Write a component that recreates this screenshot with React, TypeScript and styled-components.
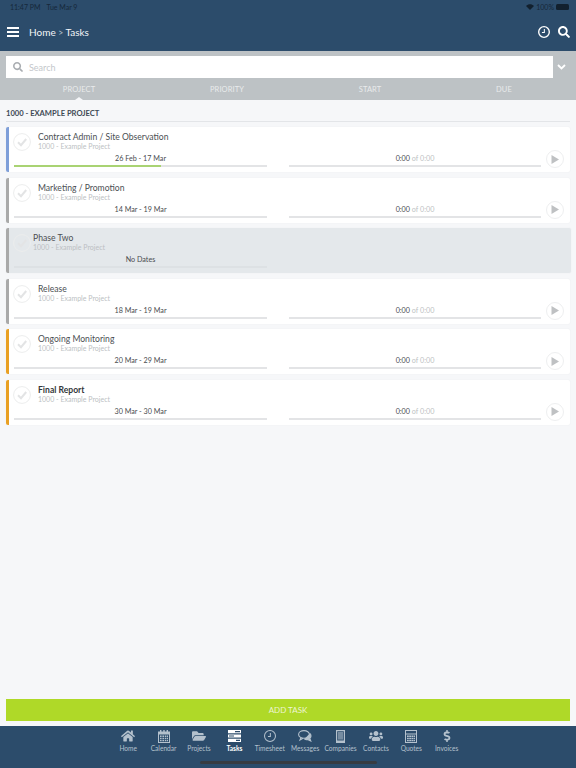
import React from "react";
import styled, { createGlobalStyle } from "styled-components";
import { FaHome, FaFolderOpen, FaUsers, FaDollarSign, FaSearch } from "react-icons/fa";

const Global = createGlobalStyle`
  html, body { margin: 0; padding: 0; background: #f6f7f9; }
  * { box-sizing: border-box; }
  body { font-family: Lato, "Open Sans", sans-serif; }
`;
const Page = styled.div`
  width: 576px; height: 768px; display: flex; flex-direction: column; overflow: hidden; background: #f6f7f9;
`;
const Header = styled.header`
  height: 51px; flex: none; background: #2c4c6b; padding: 0 6px 0 7px; display: flex; flex-direction: column;
`;
const StatusBar = styled.div`
  height: 14px; display: flex; align-items: center; justify-content: space-between; font-size: 7px; color: #16283a; padding: 0 1px 0 3px;
`;
const StatusRight = styled.div`display: flex; align-items: center; gap: 2px;`;
const Battery = styled.span`
  width: 13px; height: 6px; border-radius: 1.5px; background: #12202e; display: inline-block;
`;
const TimeGap = styled.span`margin-left: 6px;`;
const NavRow = styled.div`
  flex: 1; display: flex; align-items: center; padding-bottom: 2px; color: #fff;
`;
const Burger = styled.span`
  width: 12px; height: 10px; display: flex; flex-direction: column; justify-content: space-between;
  & > i { display: block; height: 2px; background: #fff; }
`;
const Crumb = styled.span`
  margin-left: 10px; font-size: 10px; flex: 1; color: #f2f5f8;
  & > em { font-style: normal; opacity: .7; font-size: 8.5px; }
`;
const NavIcons = styled.div`display: flex; align-items: center; gap: 8px;`;
const FilterBar = styled.div`
  height: 49px; flex: none; background: #bdc2c5; display: flex; flex-direction: column; padding: 5px 6px 0;
`;
const SearchRow = styled.div`display: flex; align-items: center; height: 22px;`;
const SearchBox = styled.div`
  width: 547px; height: 22px; background: #fff; display: flex; align-items: center; padding-left: 7px; gap: 6px;
  color: #c4c7cb; font-size: 9px;
  & > svg { color: #a9adb1; }
`;
const Chevron = styled.span`margin-left: 4px; display: flex;`;
const Tabs = styled.div`
  display: grid; grid-template-columns: 146px 150px 136px 132px; margin-top: 7px; flex: 1;
`;
const Tab = styled.div<{ $active?: boolean }>`
  position: relative; text-align: center; font-size: 7.5px; line-height: 10px; color: #e9ebec; letter-spacing: .1px;
  ${p => p.$active ? `&::after {
    content: ""; position: absolute; left: 50%; bottom: 0; margin-left: -4px; border: 4px solid transparent; border-top: 0;
    border-bottom: 3px solid #f6f7f9;
  }` : ""}
`;
const Content = styled.main`flex: 1; padding: 0 6px; display: flex; flex-direction: column;`;
const SectionTitle = styled.h2`
  margin: 0; padding-top: 8px; height: 22px; font-size: 7.6px; line-height: 11px; font-weight: 700; color: #3f4a55; letter-spacing: 0;
  border-bottom: 1px solid #e3e5e8;
`;
const List = styled.div`display: flex; flex-direction: column; gap: 5.6px; padding-top: 5px;`;
const Card = styled.article<{ $stripe: string; $muted?: boolean }>`
  height: 45px; border-left: 3px solid ${p => p.$stripe}; border-radius: 2px; padding: 5px 0 0 4px;
  background: ${p => p.$muted ? "#e4e8eb" : "#fff"};
  box-shadow: 0 0 2px rgba(60, 70, 80, .06);
  margin-right: ${p => p.$muted ? "-1px" : "0"};
`;
const TopRow = styled.div`height: 19px; display: flex; align-items: flex-start;`;
const Check = styled.svg`width: 18px; height: 18px; margin-top: 1px; flex: none;`;
const Titles = styled.div<{ $muted?: boolean }>`margin-left: ${p => p.$muted ? "2px" : "7px"};`;
const Title = styled.div<{ $bold?: boolean }>`
  font-size: 8.6px; line-height: 10px; color: ${p => p.$bold ? "#33373b" : "#4b4f53"}; font-weight: ${p => p.$bold ? 700 : 400};
`;
const Sub = styled.div`font-size: 7px; line-height: 9px; color: #bcbfc3;`;
const BottomRow = styled.div`height: 17px; display: flex; align-items: flex-end; margin-left: 1px;`;
const Segment = styled.div`width: 253px; flex: none; padding-bottom: 1px;`;
const TimeSegment = styled(Segment)`width: 252px; margin-left: 22px;`;
const SegText = styled.div`font-size: 7.2px; line-height: 10px; height: 11px; text-align: center; color: #4a4d50;`;
const Of = styled.span`color: #bcbfc3;`;
const Track = styled.div<{ $muted?: boolean }>`height: 2px; background: ${p => p.$muted ? "#dde1e4" : "#e3e4e6"};`;
const Fill = styled.div`height: 100%; background: #a9d373;`;
const Play = styled.span`
  width: 18px; height: 18px; margin-left: 5px; border: 1px solid #eeeff0; border-radius: 50%; display: flex; align-items: center; justify-content: center; flex: none;
`;
const AddTask = styled.button`
  height: 22px; flex: none; margin: 0 6px 5px; border: 0; background: #afd928; color: #eef5d4; font: 400 8px/22px Lato, sans-serif; padding: 0;
`;
const TabBar = styled.nav`
  height: 42px; flex: none; background: #2c4c6b; position: relative; display: flex; padding: 3px 0 0 110.5px;
`;
const TabItem = styled.div<{ $active?: boolean }>`
  width: 35.4px; flex: none; display: flex; flex-direction: column; align-items: center;
  color: ${p => p.$active ? "#fff" : "#b4c1cd"}; font-size: 6.6px; line-height: 9px; white-space: nowrap; font-weight: ${p => p.$active ? 700 : 400};
`;
const IconSlot = styled.span`height: 14px; display: flex; align-items: center; justify-content: center; margin-bottom: 1px;`;
const HomeIndicator = styled.div`
  position: absolute; left: 200px; bottom: 4px; width: 177px; height: 3px; border-radius: 2px; background: #383c42;
`;

const CheckIcon = () => (
  <Check viewBox="0 0 18 18" fill="none">
    <circle cx="9" cy="9" r="8.4" stroke="#eceded" strokeWidth="1" fill="none" />
    <path d="M5 9.2 8 12.2 13.2 6" stroke="#e3e4e5" strokeWidth="2" />
  </Check>
);
const PlayIcon = () => (
  <Play><svg width="8" height="9" viewBox="0 0 8 9"><path d="M0.5 0 8 4.5 0.5 9z" fill="#bfc1c3" /></svg></Play>
);
const ClockIcon = ({ size, sw }: { size: number; sw: number }) => (
  <svg width={size} height={size} viewBox="0 0 14 14" fill="none" stroke="currentColor">
    <circle cx="7" cy="7" r={7 - sw / 2} strokeWidth={sw} />
    <path d="M7.4 3.5V7.6H4.6" strokeWidth="1.2" />
  </svg>
);
const Calendar = () => (
  <svg width="12" height="13" viewBox="0 0 12 13" fill="currentColor">
    <path d="M2 0h1.4v2H2zM8.6 0H10v2H8.6zM5.3 0h1.4v2H5.3z" />
    <path d="M0 1.5h12V13H0zM1 4.5V12h10V4.5z" fillRule="evenodd" />
    <path d="M2 5.5h1.6v1.4H2zM4.4 5.5H6v1.4H4.4zM6.8 5.5h1.6v1.4H6.8zM9 5.5h1v1.4H9zM2 7.8h1.6v1.4H2zM4.4 7.8H6v1.4H4.4zM6.8 7.8h1.6v1.4H6.8zM9 7.8h1v1.4H9zM2 10h1.6v1.2H2zM4.4 10H6v1.2H4.4zM6.8 10h1.6v1.2H6.8zM9 10h1v1.2H9z" />
  </svg>
);
const TasksIcon = () => (
  <svg width="13" height="12" viewBox="0 0 13 12" fill="currentColor">
    <path d="M0 0h13v3.2H0zM0 4.4h13v3.2H0zM0 8.8h13V12H0z" />
    <path d="M7 1h5v1.2H7zM1 5.4h5v1.2H1zM8 9.8h4V11H8z" fill="#2c4c6b" />
  </svg>
);
const Messages = () => (
  <svg width="14" height="12" viewBox="0 0 14 12" fill="none" stroke="currentColor" strokeWidth="1.1">
    <ellipse cx="6" cy="4.4" rx="5.4" ry="3.8" />
    <path d="M3 7.5 2 10l3-1.8" />
    <path d="M11.8 3.4c1.6 1.4 1.6 3.6 0 5L12.8 11 9.6 9.5c-1.2.2-2.3 0-3.2-.5" fill="currentColor" />
  </svg>
);
const Companies = () => (
  <svg width="9" height="13" viewBox="0 0 9 13" fill="currentColor">
    <path d="M0 0h9v13H0zM1.2 1.2V10.5h6.6V1.2z" fillRule="evenodd" />
    <path d="M2 2h5v7.6H2z" opacity=".55" />
    <path d="M3.5 11h2v1.2h-2z" />
  </svg>
);
const Quotes = () => (
  <svg width="12" height="13" viewBox="0 0 12 13" fill="currentColor">
    <path d="M0 0h12v13H0zM1 1v2.6h10V1zM1 4.6V12h10V4.6z" fillRule="evenodd" />
    <path d="M2 5.6h1.8V7H2zM4.2 5.6H6V7H4.2zM6.4 5.6h1.8V7H6.4zM8.6 5.6h1.4V7H8.6zM2 7.8h1.8v1.4H2zM4.2 7.8H6v1.4H4.2zM6.4 7.8h1.8v1.4H6.4zM8.6 7.8h1.4v1.4H8.6zM2 10h1.8v1.2H2zM4.2 10H6v1.2H4.2zM6.4 10h1.8v1.2H6.4zM8.6 10h1.4v1.2H8.6z" />
  </svg>
);

const tasks = [
  { title: "Contract Admin / Site Observation", dates: "26 Feb - 17 Mar", stripe: "#7f9fd9", progress: 58 },
  { title: "Marketing / Promotion", dates: "14 Mar - 19 Mar", stripe: "#a9a9a9" },
  { title: "Phase Two", dates: "No Dates", stripe: "#a9a9a9", muted: true },
  { title: "Release", dates: "18 Mar - 19 Mar", stripe: "#a9a9a9" },
  { title: "Ongoing Monitoring", dates: "20 Mar - 29 Mar", stripe: "#e9a023" },
  { title: "Final Report", dates: "30 Mar - 30 Mar", stripe: "#e9a023", bold: true },
];
const navItems: { label: string; icon: React.ReactNode; active?: boolean }[] = [
  { label: "Home", icon: <FaHome size={14} /> },
  { label: "Calendar", icon: <Calendar /> },
  { label: "Projects", icon: <FaFolderOpen size={14} /> },
  { label: "Tasks", icon: <TasksIcon />, active: true },
  { label: "Timesheet", icon: <ClockIcon size={12} sw={1.2} /> },
  { label: "Messages", icon: <Messages /> },
  { label: "Companies", icon: <Companies /> },
  { label: "Contacts", icon: <FaUsers size={14} /> },
  { label: "Quotes", icon: <Quotes /> },
  { label: "Invoices", icon: <FaDollarSign size={12} /> },
];

export default function App() {
  return (
    <Page>
      <Global />
      <Header>
        <StatusBar>
          <span>11:47 PM<TimeGap>Tue Mar 9</TimeGap></span>
          <StatusRight>
            <svg width="8" height="6" viewBox="0 0 8 6" fill="#12202e"><path d="M4 6 0 2c2.300-2.300 5.700-2.300 8 0z" /></svg>
            <span>100%</span>
            <Battery />
          </StatusRight>
        </StatusBar>
        <NavRow>
          <Burger><i /><i /><i /></Burger>
          <Crumb>Home <em>&gt;</em> Tasks</Crumb>
          <NavIcons>
            <ClockIcon size={12} sw={1.6} />
            <FaSearch size={12} />
          </NavIcons>
        </NavRow>
      </Header>
      <FilterBar>
        <SearchRow>
          <SearchBox><FaSearch size={10} />Search</SearchBox>
          <Chevron>
            <svg width="9" height="6" viewBox="0 0 9 6" fill="none" stroke="#fff" strokeWidth="1.8"><path d="M1 1 4.500 4.500 8 1" /></svg>
          </Chevron>
        </SearchRow>
        <Tabs>
          <Tab $active>PROJECT</Tab>
          <Tab>PRIORITY</Tab>
          <Tab>START</Tab>
          <Tab>DUE</Tab>
        </Tabs>
      </FilterBar>
      <Content>
        <SectionTitle>1000 - EXAMPLE PROJECT</SectionTitle>
        <List>
          {tasks.map(t => (
            <Card key={t.title} $stripe={t.stripe} $muted={t.muted}>
              <TopRow>
                <CheckIcon />
                <Titles $muted={t.muted}>
                  <Title $bold={t.bold}>{t.title}</Title>
                  <Sub>1000 - Example Project</Sub>
                </Titles>
              </TopRow>
              <BottomRow>
                <Segment>
                  <SegText>{t.dates}</SegText>
                  <Track $muted={t.muted}>
                    {t.progress ? <Fill style={{ width: `${t.progress}%` }} /> : null}
                  </Track>
                </Segment>
                {t.muted ? null : (
                  <>
                    <TimeSegment>
                      <SegText>0:00 <Of>of 0:00</Of></SegText>
                      <Track />
                    </TimeSegment>
                    <PlayIcon />
                  </>
                )}
              </BottomRow>
            </Card>
          ))}
        </List>
      </Content>
      <AddTask>ADD TASK</AddTask>
      <TabBar>
        {navItems.map(n => (
          <TabItem key={n.label} $active={n.active}>
            <IconSlot>{n.icon}</IconSlot>
            {n.label}
          </TabItem>
        ))}
        <HomeIndicator />
      </TabBar>
    </Page>
  );
}
